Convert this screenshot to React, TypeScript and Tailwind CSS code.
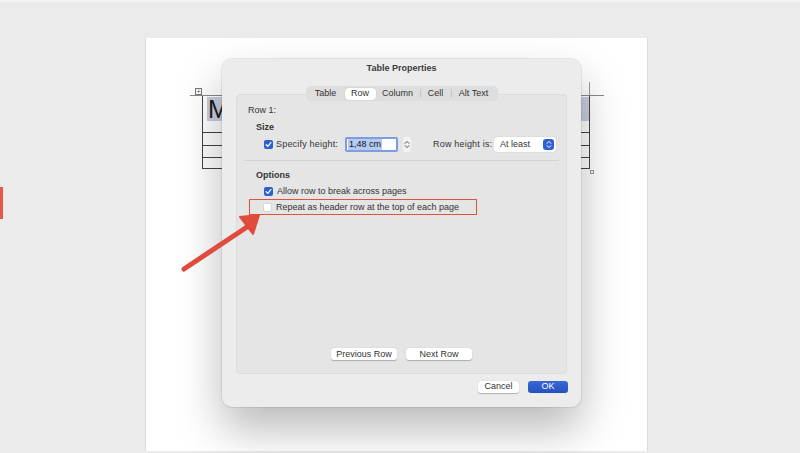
import React from "react";

const font = { fontFamily: '"Liberation Sans", Arial, sans-serif' };

const Checked = () => (
    <svg width="9" height="9" viewBox="0 0 9 9" className="shrink-0">
        <rect x="0" y="0" width="9" height="9" rx="2" fill="#2d5fce" />
        <path d="M2.2 4.7 L3.8 6.3 L6.9 2.6" fill="none" stroke="#fff" strokeWidth="1.3" strokeLinecap="round" strokeLinejoin="round" />
    </svg>
);

const Unchecked = () => (
    <span className="block h-[9px] w-[9px] shrink-0 rounded-[2px] border border-[#d6d6d6] bg-white" />
);

const UpDown = ({ color }: { color: string }) => (
    <svg width="6" height="9" viewBox="0 0 6 9">
        <path d="M1 3.4 L3 1.4 L5 3.4 M1 5.6 L3 7.6 L5 5.6" fill="none" stroke={color} strokeWidth="1" strokeLinecap="round" strokeLinejoin="round" />
    </svg>
);

const Tabs = () => (
    <div className="relative z-10 mx-auto flex h-[15px] w-[192px] items-center rounded-[5px] bg-[#dedede] px-[2px] text-[9px] text-[#333]">
        <span className="w-[36px] text-center">Table</span>
        <span className="ml-px flex h-[12px] w-[31px] items-center justify-center rounded-[4px] bg-white shadow-[0_0_1px_rgba(0,0,0,0.25)]">Row</span>
        <span className="w-[44px] text-center">Column</span>
        <span className="h-[9px] w-px bg-[#c6c6c6]" />
        <span className="w-[30px] text-center">Cell</span>
        <span className="h-[9px] w-px bg-[#c6c6c6]" />
        <span className="w-[44px] text-center">Alt Text</span>
    </div>
);

const Dialog = () => (
    <div className="absolute left-[222px] top-[57px] flex h-[348px] w-[359px] flex-col rounded-[10px] bg-[#ececec] text-[#333] shadow-[0_22px_45px_rgba(0,0,0,0.28),0_0_0_1px_rgba(0,0,0,0.07)]">
        <div className="flex h-[27px] justify-center pt-[4px] text-[9px] font-bold leading-[11px] text-[#3b3b3b]">
            Table Properties
        </div>

        <Tabs />

        <div className="mx-[14px] -mt-[7px] flex h-[280px] flex-col rounded-[4px] border border-[#dcdcdc] bg-[#e5e5e5] text-[9px] leading-[11px]">
            <div className="pl-[11px] pt-[10px]">Row 1:</div>
            <div className="mt-[6px] pl-[19px] font-bold">Size</div>

            <div className="mt-[4px] flex h-[15px] items-center whitespace-nowrap pl-[27px]">
                <Checked />
                <span className="ml-[3px] w-[64px] shrink-0 tracking-[0.2px]">Specify height:</span>
                <div className="ml-[5px] flex h-[15px] w-[53px] shrink-0 items-center rounded-[2px] border-2 border-[#7c9ee0] bg-white pl-[1px]">
                    <span className="bg-[#b5cbf3] px-px text-[#111]">1,48 cm</span>
                </div>
                <div className="ml-[5px] flex h-[15px] w-[8px] shrink-0 items-center justify-center rounded-[2px] bg-[#f2f2f2]">
                    <UpDown color="#555" />
                </div>
                <span className="ml-[22px] w-[56px] shrink-0 tracking-[0.2px]">Row height is:</span>
                <div className="ml-[5px] flex h-[15px] w-[62px] shrink-0 items-center justify-between rounded-[3px] bg-white pl-[6px] pr-[2px] shadow-[0_0_1px_rgba(0,0,0,0.3)]">
                    <span>At least</span>
                    <span className="flex h-[11px] w-[11px] items-center justify-center rounded-[3px] bg-[#2f5fd0]">
                        <UpDown color="#fff" />
                    </span>
                </div>
            </div>

            <div className="mx-[7px] mt-[8px] h-px bg-[#d2d2d2]" />

            <div className="mt-[9px] pl-[19px] font-bold">Options</div>
            <div className="mt-[5px] flex items-center gap-[4px] pl-[27px]">
                <Checked />
                <span>Allow row to break across pages</span>
            </div>
            <div className="ml-[12px] mt-[2px] flex h-[16px] w-[228px] items-center gap-[4px] border-[1.5px] border-[#e0533f] pl-[13px]">
                <Unchecked />
                <span>Repeat as header row at the top of each page</span>
            </div>

            <div className="mb-[13px] mt-auto flex justify-center gap-[9px]">
                <button className="flex h-[12px] w-[66px] items-center justify-center rounded-[3px] bg-white text-[9px] shadow-[0_0.5px_1px_rgba(0,0,0,0.25)]">
                    Previous Row
                </button>
                <button className="flex h-[12px] w-[66px] items-center justify-center rounded-[3px] bg-white text-[9px] shadow-[0_0.5px_1px_rgba(0,0,0,0.25)]">
                    Next Row
                </button>
            </div>
        </div>

        <div className="mt-[7px] flex justify-end gap-[9px] pr-[13px] text-[9px]">
            <button className="flex h-[12px] w-[41px] items-center justify-center rounded-[3px] bg-white text-[#333] shadow-[0_0.5px_1px_rgba(0,0,0,0.25)]">
                Cancel
            </button>
            <button className="flex h-[12px] w-[40px] items-center justify-center rounded-[3px] bg-gradient-to-b from-[#3a68d6] to-[#2650bf] text-white">
                OK
            </button>
        </div>
    </div>
);

const DocTable = () => (
    <div className="relative ml-[44px] w-[414px]">
        <div className="h-[13px] pl-[5px] pt-[6px]">
            <span className="flex h-[7px] w-[7px] items-center justify-center border border-[#777] bg-white text-[7px] leading-none text-[#555]">
                +
            </span>
        </div>
        <div className="absolute left-[399px] top-0 h-[13px] w-px bg-[#999]" />
        <div className="h-px bg-[#888]" />
        <div className="ml-[12px] w-[388px] border-x border-[#444]">
            <div className="h-[36px] pl-[4px] pt-px">
                <div className="flex h-[24px] items-center bg-[#c9cde0] pl-px text-[25px] leading-none text-[#1c1c1c]">
                    M
                </div>
            </div>
            <div className="h-[13px] border-t border-[#444]" />
            <div className="h-[12px] border-t border-[#444]" />
            <div className="h-[12px] border-y border-[#444]" />
        </div>
        <span className="absolute left-[400px] top-[88px] h-[4px] w-[4px] border border-[#999] bg-white" />
    </div>
);

export default function App() {
    return (
        <div className="relative h-[453px] w-[800px] overflow-hidden border-t-2 border-[#f4f4f4] bg-[#ebebeb]" style={font}>
            <div className="ml-[145px] mt-[36px] h-[413px] w-[503px] border-x border-[#dadada] bg-white pt-[44px]">
                <DocTable />
            </div>

            <span className="absolute left-0 top-[185px] h-[32px] w-[3px] bg-[#e4594a]" />

            <Dialog />

            <svg className="pointer-events-none absolute left-0 top-0" width="800" height="453" viewBox="0 0 800 453">
                <line x1="184" y1="267" x2="250" y2="223" stroke="#e04b3b" strokeWidth="5" strokeLinecap="round" />
                <polygon points="259,213 240,215 253,232" fill="#e04b3b" stroke="#e04b3b" strokeWidth="2" strokeLinejoin="round" />
            </svg>
        </div>
    );
}
